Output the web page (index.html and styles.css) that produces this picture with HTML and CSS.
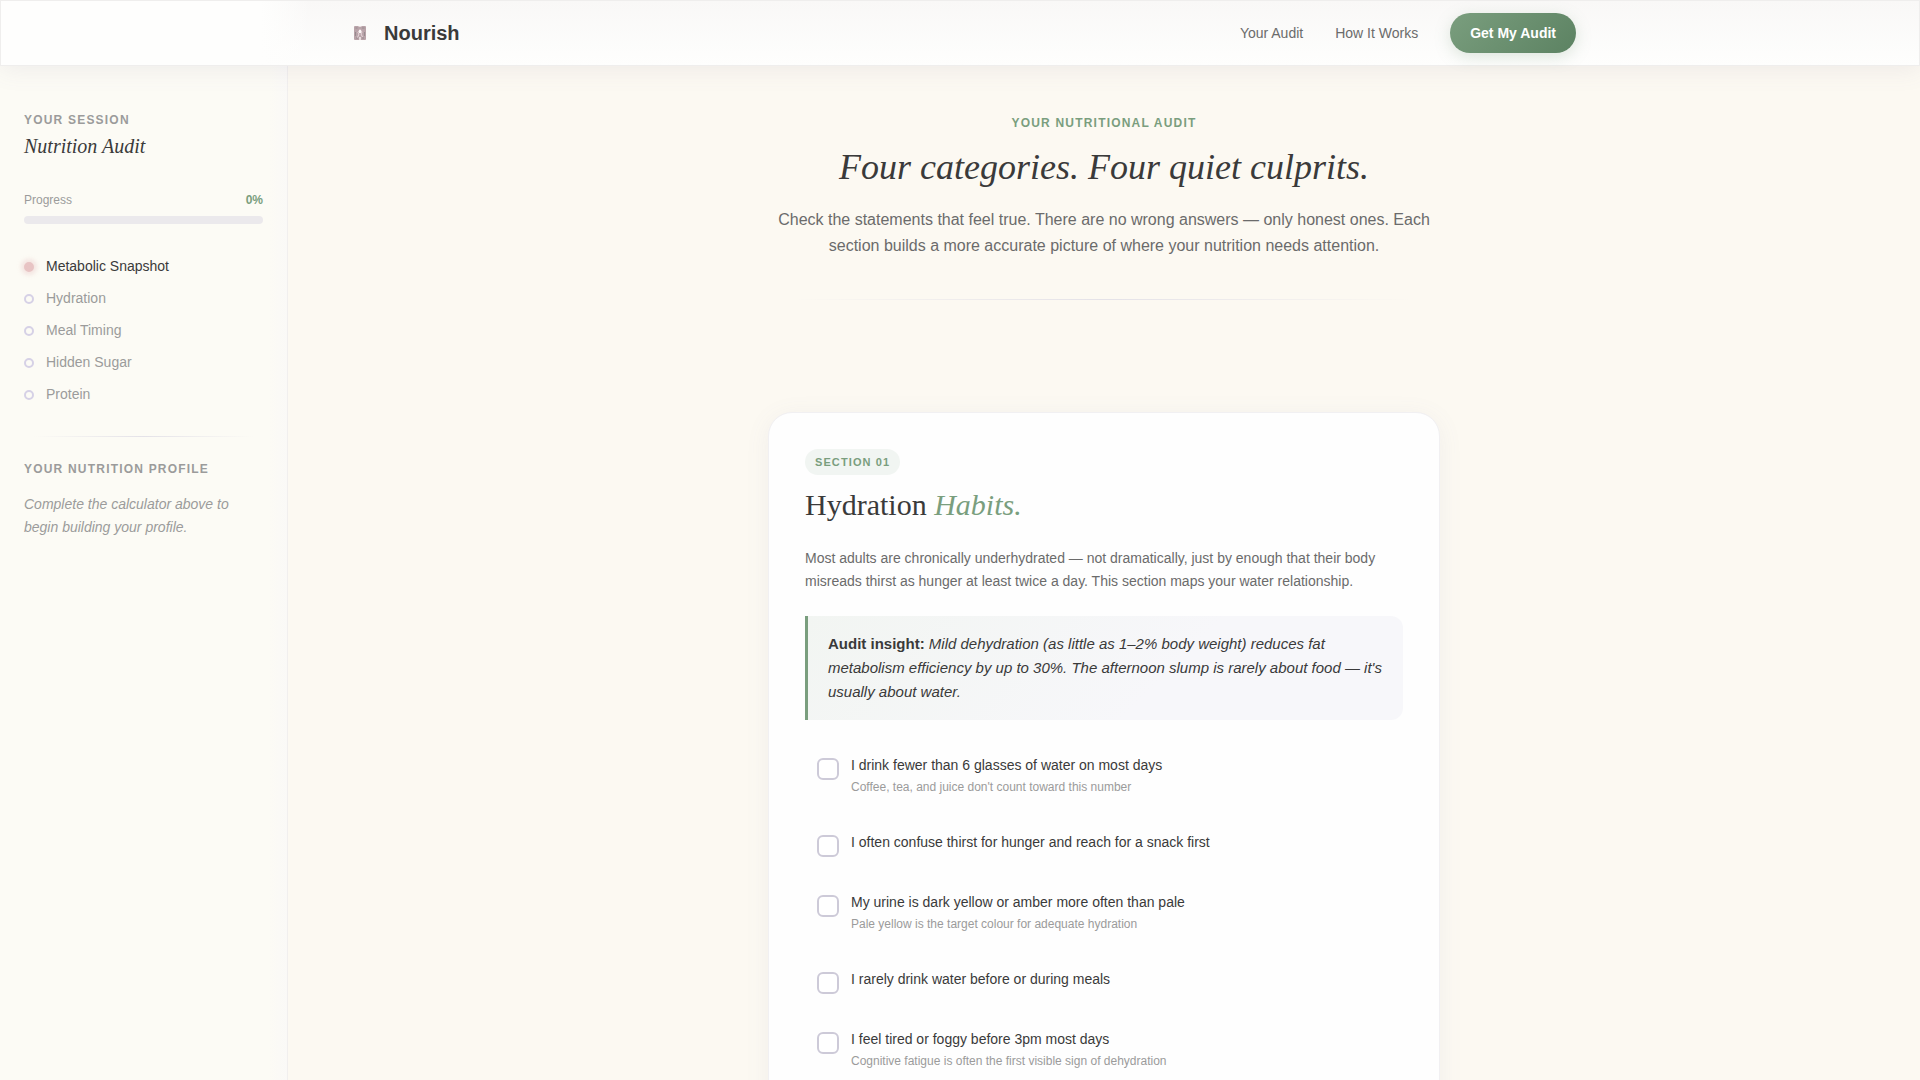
FILE: index.html
```html
<!DOCTYPE html>
<html lang="en">
<head>
    <meta charset="UTF-8">
    <meta name="viewport" content="width=device-width, initial-scale=1.0">
    <title>Nourish - Nutrition Audit</title>
    <link rel="stylesheet" href="styles.css">
</head>
<body>
    <header class="navbar">
        <div class="navbar-inner">
            <a class="brand" href="#">
                <svg class="brand-icon" viewBox="0 0 32 32" aria-hidden="true">
                    <rect x="10" y="9" width="12" height="14" rx="1" fill="#b9a3a9"/>
                    <path d="M11.5 11h2M18 11h2.500M11.500 15v4M20.500 15v4M12 21h2M18 21h2" stroke="#978b8e" stroke-width="1" fill="none"/>
                    <path d="M14.500 9h3v1h-3z" fill="#e6dcdd"/>
                    <path d="M16 12.500l2 2.500-1 2 1.500 3M16 12.500l-2 3 1 1.500-1.500 3.500" stroke="#e8d9dc" stroke-width="1" fill="none"/>
                    <path d="M15 13h2v3h-2z" fill="#fbf6f6"/>
                    <path d="M15 20h2v3h-2z" fill="#e6dcdd"/>
                </svg>
                <span>Nourish</span>
            </a>
            <nav class="nav-links">
                <a href="#audit">Your Audit</a>
                <a href="#how">How It Works</a>
                <button class="btn-primary" type="button">Get My Audit</button>
            </nav>
        </div>
    </header>

    <div class="layout">
        <aside class="sidebar">
            <p class="label">Your Session</p>
            <h2 class="session-title">Nutrition Audit</h2>

            <div class="progress-head">
                <span>Progress</span>
                <span class="progress-value">0%</span>
            </div>
            <div class="progress-track"></div>

            <ul class="steps">
                <li class="step active">Metabolic Snapshot</li>
                <li class="step">Hydration</li>
                <li class="step">Meal Timing</li>
                <li class="step">Hidden Sugar</li>
                <li class="step">Protein</li>
            </ul>

            <div class="divider"></div>

            <p class="label">Your Nutrition Profile</p>
            <p class="profile-note">Complete the calculator above to begin building your profile.</p>
        </aside>

        <main class="content" id="audit">
            <section class="intro">
                <p class="eyebrow">Your Nutritional Audit</p>
                <h1>Four categories. Four quiet culprits.</h1>
                <p class="lead">Check the statements that feel true. There are no wrong answers — only honest ones. Each section builds a more accurate picture of where your nutrition needs attention.</p>
                <div class="divider"></div>
            </section>

            <section class="card">
                <span class="badge">Section 01</span>
                <h2>Hydration <em>Habits.</em></h2>
                <p class="card-text">Most adults are chronically underhydrated — not dramatically, just by enough that their body misreads thirst as hunger at least twice a day. This section maps your water relationship.</p>

                <blockquote class="insight"><strong>Audit insight:</strong> Mild dehydration (as little as 1–2% body weight) reduces fat metabolism efficiency by up to 30%. The afternoon slump is rarely about food — it's usually about water.</blockquote>

                <div class="checklist">
                    <label class="check">
                        <input type="checkbox">
                        <span class="check-body">
                            <span class="check-title">I drink fewer than 6 glasses of water on most days</span>
                            <small>Coffee, tea, and juice don't count toward this number</small>
                        </span>
                    </label>
                    <label class="check">
                        <input type="checkbox">
                        <span class="check-body">
                            <span class="check-title">I often confuse thirst for hunger and reach for a snack first</span>
                        </span>
                    </label>
                    <label class="check">
                        <input type="checkbox">
                        <span class="check-body">
                            <span class="check-title">My urine is dark yellow or amber more often than pale</span>
                            <small>Pale yellow is the target colour for adequate hydration</small>
                        </span>
                    </label>
                    <label class="check">
                        <input type="checkbox">
                        <span class="check-body">
                            <span class="check-title">I rarely drink water before or during meals</span>
                        </span>
                    </label>
                    <label class="check">
                        <input type="checkbox">
                        <span class="check-body">
                            <span class="check-title">I feel tired or foggy before 3pm most days</span>
                            <small>Cognitive fatigue is often the first visible sign of dehydration</small>
                        </span>
                    </label>
                </div>
            </section>
        </main>
    </div>
</body>
</html>
```

FILE: styles.css
```css
*,
*::before {
    box-sizing: border-box;
    margin: 0;
    padding: 0;
}

:root {
    --sage: #7a9e7e;
    --sage-dark: #5c8262;
    --ink: #3a3a3a;
    --muted: #6b6b6b;
    --soft: #9b9b9b;
    --lavender: #cdcad8;
    --cream: #fcf9f2;
}

body {
    display: flex;
    flex-direction: column;
    height: 100vh;
    overflow: hidden;
    font-family: "Liberation Sans", Arial, sans-serif;
    font-size: 14px;
    line-height: 23px;
    color: var(--ink);
    background-color: var(--cream);
}

a {
    color: inherit;
    text-decoration: none;
}

/* Header */
.navbar {
    position: relative;
    z-index: 10;
    flex: none;
    border: 1px solid #efeeed;
    background: linear-gradient(90deg, #fefefd 260px, rgba(254, 254, 253, 0) 310px),
                linear-gradient(180deg, #f9f8f7, #fefefd);
    box-shadow: 0 4px 24px rgba(120, 110, 150, 0.1);
}

.navbar-inner {
    display: flex;
    align-items: center;
    justify-content: space-between;
    max-width: 1280px;
    margin: 0 auto;
    padding: 12px 24px;
}

.brand {
    display: flex;
    align-items: center;
    gap: 8px;
    font-size: 20px;
    font-weight: bold;
}

.brand-icon {
    width: 32px;
    height: 32px;
}

.nav-links {
    display: flex;
    align-items: center;
    gap: 32px;
    color: var(--muted);
}

.btn-primary {
    height: 40px;
    padding: 0 20px;
    border: none;
    border-radius: 20px;
    font-family: inherit;
    font-size: 14px;
    font-weight: bold;
    color: #fff;
    background: linear-gradient(135deg, var(--sage), var(--sage-dark));
    box-shadow: 0 4px 16px rgba(122, 158, 126, 0.25);
    cursor: pointer;
}

/* Sidebar */
.layout {
    display: flex;
    flex: 1;
    min-height: 0;
}

.sidebar {
    flex: none;
    width: 288px;
    padding: 43px 24px;
    border-right: 1px solid #f1efee;
    background: linear-gradient(90deg, #fcfbf5 270px, #faf9f7);
}

.label {
    font-size: 12px;
    font-weight: bold;
    letter-spacing: 0.1em;
    text-transform: uppercase;
    color: var(--soft);
}

.session-title {
    margin: 1px 0 30px;
    font-family: "Liberation Serif", "Times New Roman", serif;
    font-size: 20px;
    font-style: italic;
    font-weight: normal;
    line-height: 26px;
}

.progress-head {
    display: flex;
    justify-content: space-between;
    margin-bottom: 4px;
    font-size: 12px;
    color: var(--soft);
}

.progress-value {
    font-weight: bold;
    color: var(--sage);
}

.progress-track {
    height: 8px;
    border-radius: 4px;
    background-color: #ebe9ec;
}

.steps {
    display: flex;
    flex-direction: column;
    gap: 9px;
    margin: 31px 0 30px;
    list-style: none;
}

.step {
    display: flex;
    align-items: center;
    gap: 12px;
    color: var(--soft);
}

.step::before {
    content: "";
    width: 10px;
    height: 10px;
    border: 2px solid #d6d1e6;
    border-radius: 50%;
}

.step.active {
    color: var(--ink);
}

.step.active::before {
    border-color: #e8c4c4;
    background-color: #e8c4c4;
    box-shadow: 0 0 4px 3px rgba(232, 196, 196, 0.4);
}

.divider {
    height: 1px;
    background: linear-gradient(90deg, transparent 4%, #e4e2e8 50%, transparent 96%);
}

.sidebar .divider {
    margin-bottom: 21px;
}

.profile-note {
    margin-top: 12px;
    font-style: italic;
    color: var(--soft);
}

/* Main column */
.content {
    flex: 1;
    padding: 46px 24px 64px;
    overflow-y: auto;
    scrollbar-width: none;
}

.intro {
    max-width: 672px;
    margin: 0 auto 112px;
    text-align: center;
}

.eyebrow {
    font-size: 12px;
    font-weight: bold;
    letter-spacing: 0.1em;
    text-transform: uppercase;
    color: var(--sage);
}

h1 {
    margin: 9px 0 17px;
    font-family: "Liberation Serif", "Times New Roman", serif;
    font-size: 36px;
    font-style: italic;
    font-weight: normal;
    line-height: 46px;
}

.lead {
    margin-bottom: 40px;
    font-size: 16px;
    line-height: 26px;
    color: var(--muted);
}

.card {
    max-width: 672px;
    margin: 0 auto;
    padding: 36px;
    border: 1px solid #f1f0f2;
    border-radius: 24px;
    background-color: #fefefe;
    box-shadow: 0 4px 24px rgba(120, 110, 150, 0.08);
}

.badge {
    display: inline-block;
    padding: 2px 10px;
    border-radius: 13px;
    font-size: 11px;
    font-weight: bold;
    line-height: 22px;
    letter-spacing: 0.1em;
    text-transform: uppercase;
    color: var(--sage);
    background-color: #f1f5f2;
}

.card h2 {
    margin: 11px 0 23px;
    font-family: "Liberation Serif", "Times New Roman", serif;
    font-size: 30px;
    font-weight: normal;
    line-height: 38px;
}

.card h2 em {
    color: var(--sage);
}

.card-text {
    margin-bottom: 23px;
    color: var(--muted);
}

.insight {
    margin-bottom: 24px;
    padding: 16px 20px;
    border-left: 3px solid var(--sage);
    border-radius: 0 12px 12px 0;
    font-size: 15px;
    font-style: italic;
    line-height: 24px;
    background: linear-gradient(135deg, #f2f5f2, #f7f7fa 60%);
}

.insight strong {
    font-style: normal;
}

.checklist {
    display: flex;
    flex-direction: column;
    gap: 12px;
}

.check {
    display: flex;
    align-items: flex-start;
    gap: 12px;
    padding: 12px;
    cursor: pointer;
}

.check input {
    appearance: none;
    flex: none;
    width: 22px;
    height: 22px;
    margin-top: 2px;
    border: 2px solid var(--lavender);
    border-radius: 6px;
    background-color: #fff;
}

.check input:checked {
    border-color: var(--sage);
    background-color: var(--sage);
}

.check-title,
.check small {
    display: block;
}

.check-title {
    line-height: 18px;
}

.check small {
    margin-top: 3px;
    font-size: 12px;
    line-height: 20px;
    color: var(--soft);
}
```
